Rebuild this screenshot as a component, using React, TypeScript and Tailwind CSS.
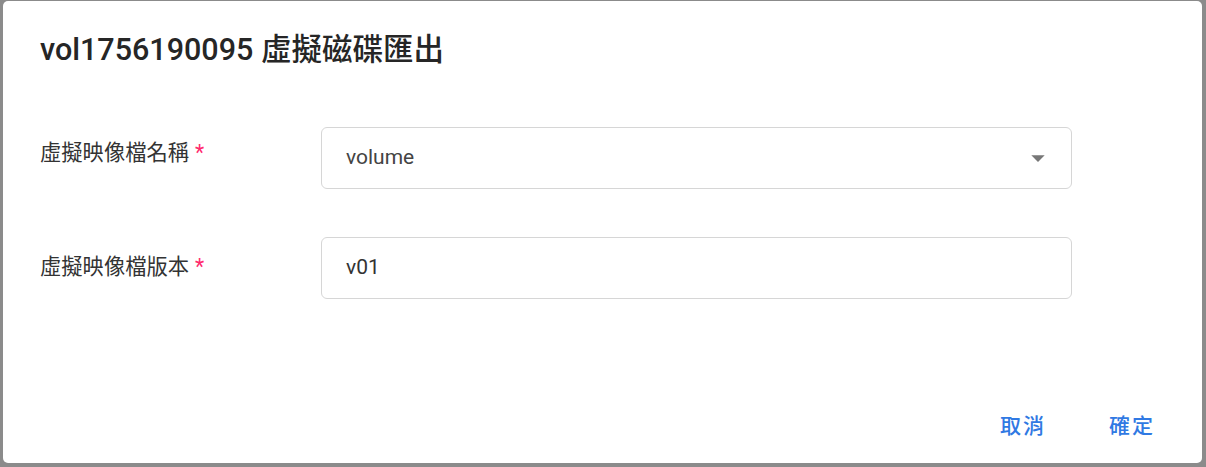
const cjk = "font-['Roboto','Noto_Sans_CJK_TC',sans-serif]";

function Field({
  label,
  labelPad,
  children,
}: {
  label: string;
  labelPad: string;
  children: React.ReactNode;
}) {
  return (
    <div className="flex items-start">
      <div className={`w-[281px] shrink-0 ${labelPad} text-[21.3px] leading-[30px] text-[#333333]`}>
        {label}
        <span className="ml-[6px] text-[#ff2a6d]">*</span>
      </div>
      <div className="w-[751px]">{children}</div>
    </div>
  );
}

export default function App() {
  return (
    <div className={`h-[467px] w-[1206px] overflow-hidden bg-[#8b8b8b] pl-[3px] pt-[1px] ${cjk}`}>
      <div className="flex h-[462px] w-[1199px] flex-col rounded-[5px] bg-white">
        <div className="px-[37px] pt-[29px]">
          <h1 className="text-[30.5px] font-medium leading-[40px] text-[#262626]">
            vol1756190095 虛擬磁碟匯出
          </h1>
        </div>

        <div className="mt-[57px] flex flex-col gap-[48px] px-[37px]">
          <Field label="虛擬映像檔名稱" labelPad="pt-[11px]">
            <div className="flex h-[62px] items-center rounded-[6px] border border-[#d6d6d6] pl-[24px] pr-[17px]">
              <span className="flex-1 text-[21px] text-[#444444]">volume</span>
              <svg viewBox="0 0 24 24" className="size-[32px] fill-[#777777]">
                <path d="M7 10l5 5 5-5z" />
              </svg>
            </div>
          </Field>
          <Field label="虛擬映像檔版本" labelPad="pt-[15px]">
            <div className="flex h-[62px] items-center rounded-[6px] border border-[#d6d6d6] px-[24px]">
              <span className="text-[21px] text-[#333333]">v01</span>
            </div>
          </Field>
        </div>

        <div className="mt-auto flex justify-end gap-[63px] pb-[22px] pr-[47px]">
          <button className="text-[21px] font-medium leading-[30px] tracking-[2px] text-[#3079e3]">
            取消
          </button>
          <button className="text-[21px] font-medium leading-[30px] tracking-[2px] text-[#3079e3]">
            確定
          </button>
        </div>
      </div>
    </div>
  );
}
